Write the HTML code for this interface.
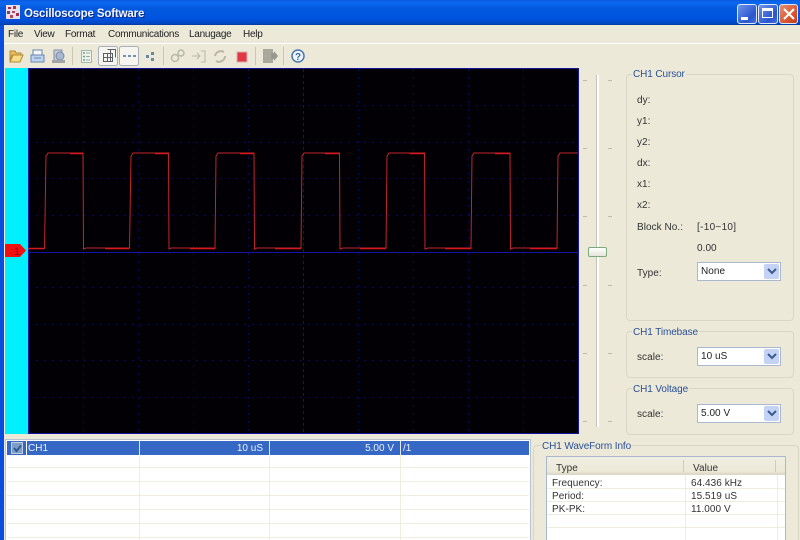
<!DOCTYPE html>
<html><head><meta charset="utf-8"><style>
html,body{margin:0;padding:0;width:800px;height:540px;overflow:hidden;background:#ece9d8;font-family:"Liberation Sans",sans-serif;font-size:11px;color:#222}
.a{position:absolute}
#page{position:relative;width:800px;height:540px;overflow:hidden;background:#ece9d8;filter:blur(.35px)}
#title{left:0;top:0;width:800px;height:25px;background:linear-gradient(#0a5be0 0,#0a6af0 3px,#0359de 8px,#0054e0 18px,#0349c8 23px,#02389f 25px)}
#t{left:24px;top:8px;color:#f4f6ff;font-weight:bold;font-size:11.5px;letter-spacing:-.15px;text-shadow:1px 1px #0a2a90}
.wb{top:4px;width:18px;height:18px;border:1px solid #dfe8fa;border-radius:3px;background:linear-gradient(135deg,#6f95ea,#2a55cf 70%,#4a70dc)}
.m{top:29px;font-size:10px;letter-spacing:-.25px;color:#222}
.sep{top:47px;width:1px;height:18px;background:#c9c6b4}
.gb{border:1px solid #d9d6c6;border-radius:4px;box-sizing:border-box}
.lg{color:#2a5097;background:#ece9d8;padding:0 1px;font-size:10px;letter-spacing:-.1px;line-height:12px;margin-top:1px}
.l{font-size:10px;letter-spacing:.05px;color:#333;margin-top:1px}
.cb{width:84px;height:19px;box-sizing:border-box;background:#fff;border:1px solid #a9b8cf}
.cb span{position:absolute;left:3px;top:3px;font-size:10px;letter-spacing:.05px;color:#222}
.cb i{position:absolute;right:1px;top:1px;width:15px;height:15px;background:#c4d3f4;border-radius:2px}
.cb svg{position:absolute;right:3px;top:5px}
.tk{width:4px;height:1px;background:#bdbaa9}
.hr{left:7px;width:522px;height:1px;background:#efedde}
.hr2{left:547px;width:238px;height:1px;background:#efedde}
.r{color:#eef2fa;font-size:10px;top:443px}
</style></head><body><div id="page">
<div class="a" id="title"></div>
<svg class="a" style="left:6px;top:5px" width="15" height="15"><rect width="14" height="14" fill="#e8dfe8"/><rect x="2" y="2" width="3" height="2" fill="#a82c4c"/><rect x="7" y="1" width="3" height="3" fill="#b03050"/><rect x="1" y="6" width="3" height="3" fill="#704878"/><rect x="6" y="6" width="3" height="2" fill="#c04060"/><rect x="10" y="8" width="3" height="3" fill="#a82c4c"/><rect x="4" y="10" width="3" height="3" fill="#b84060"/></svg>
<div class="a" id="t">Oscilloscope Software</div>
<div class="a wb" style="left:737px"><div class="a" style="left:3px;top:12px;width:7px;height:3px;background:#fff"></div></div>
<div class="a wb" style="left:758px"><div class="a" style="left:3px;top:3px;width:11px;height:10px;box-sizing:border-box;border:1px solid #fff;border-top:3px solid #fff"></div></div>
<div class="a wb" style="left:779px;width:17px;background:linear-gradient(135deg,#e8906c,#d5502a 70%,#c04020)"><svg class="a" style="left:3px;top:3px" width="12" height="12"><path d="M1 1L11 11M11 1L1 11" stroke="#fff" stroke-width="2"/></svg></div>

<div class="a" style="left:0;top:25px;width:4px;height:515px;background:#0a4ee0"></div>
<div class="a m" style="left:8px">File</div>
<div class="a m" style="left:34px">View</div>
<div class="a m" style="left:65px">Format</div>
<div class="a m" style="left:108px">Communications</div>
<div class="a m" style="left:189px">Lanugage</div>
<div class="a m" style="left:243px">Help</div>
<div class="a" style="left:4px;top:43px;width:796px;height:1px;background:#fff"></div>

<svg class="a" style="left:0;top:44px" width="320" height="24" fill="none">
<path d="M10 7h5l1 2h5v2H12l-2 6z" fill="#eebc58" stroke="#b08a38"/><path d="M10 18l3-7h10l-3 7z" fill="#f8dc88" stroke="#b08a38"/>
<path d="M33 6h9v5h-9z" fill="#f6f6f6" stroke="#6888b0"/><path d="M31 11h13v7H31z" fill="#bcd2ee" stroke="#6888b0"/><path d="M34 14h7" stroke="#6888b0"/>
<path d="M54 6h8v11h-8z" fill="#c8ccd4" stroke="#8090a8"/><circle cx="60" cy="12" r="4" fill="#a8b8d0" stroke="#7888a0"/><path d="M52 16h13v3H52z" fill="#a0a4a8"/>
<path d="M81.500 6.500h10v12h-10z" fill="#eef4ea" stroke="#a0b8a8"/><path d="M83 9h2M83 12.500h2M83 16h2" stroke="#60a880" stroke-width="1.500"/><path d="M86 9h4M86 12.500h4M86 16h4" stroke="#98a8b0"/>
<rect x="98.500" y="2.500" width="19" height="19" rx="2" fill="#f6f5ef" stroke="#a8b0bc"/><path d="M103.500 9.500h9v8h-9zM107.500 5.500h8v8M107.500 9.500v8M103.500 13.500h9M110.500 5.500v12" stroke="#586068"/>
<rect x="119.500" y="2.500" width="19" height="19" rx="2" fill="#f6f5ef" stroke="#a8b0bc"/><path d="M123 12h14" stroke="#7890b0" stroke-dasharray="3 2" stroke-width="2"/>
<path d="M146 11h3v3h-3zM151 8h3v3h-3zM151 14h3v3h-3z" fill="#6888a8"/>
<circle cx="175" cy="14" r="3.500" stroke="#b8b8a8" stroke-width="1.500"/><circle cx="181" cy="9" r="3" stroke="#b8b8a8" stroke-width="1.500"/>
<path d="M192 12h7m-2-3l3 3-3 3M201 7h4v11h-4" stroke="#b8b8a8"/>
<path d="M215 12a6 6 0 0 1 9-4m1 4a6 6 0 0 1-9 5" stroke="#b8b8a8" stroke-width="2"/>
<rect x="237" y="8" width="10" height="10" fill="#e03844" stroke="#d8b0b0"/>
<path d="M263 5h10v14h-10z" fill="#a8a89c"/><path d="M271 9h3v-2l4 5-4 5v-2h-3z" fill="#98988c"/>
<circle cx="298" cy="12" r="6" fill="#f0f4fa" stroke="#4878b0" stroke-width="1.500"/>
<text x="295" y="16" font-size="10" font-weight="bold" fill="#3868a8" font-family="Liberation Sans">?</text>
</svg>
<div class="a sep" style="left:72px"></div>
<div class="a sep" style="left:163px"></div>
<div class="a sep" style="left:255px"></div>
<div class="a sep" style="left:283px"></div>

<div class="a" style="left:5px;top:68px;width:23px;height:366px;background:#00f0ff"></div>
<svg class="a" style="left:5px;top:68px" width="574" height="366">
<rect x="23" y="0" width="551" height="366" fill="#020004"/>
<g stroke="#09095e" stroke-dasharray="2 6" stroke-width="1">
<path d="M78.500 1V365M133.500 1V365M188.500 1V365M243.500 1V365M353.500 1V365M408.500 1V365M463.500 1V365M518.500 1V365"/>
<path d="M23 37.500H573M23 74.500H573M23 110.500H573M23 147.500H573M23 219.500H573M23 256.500H573M23 292.500H573M23 329.500H573"/>
</g>
<g stroke="#10108c">
<path d="M298.500 1V365" stroke-dasharray="3 3"/><path d="M23 184.500H573" stroke="#1414a8"/>
<rect x="23.500" y=".5" width="550" height="365" fill="none" stroke="#1414a0"/>
</g>
<path d="M23 180.500H39.500L41 88L43 85H78L78.500 181L81 180H124.500L126 88L128 85H163.500L164 181L166 180H210L211 88L213 85H249L249.500 181L252 180H296L297 88L299 85H334.500L335 181L338 180H381L382 88L384 85H419.500L420 181L423 180H466L467 88L469 85H505L505.500 181L508 180H552L553 88L555 85H573" fill="none" stroke="#c0262c" stroke-width="1"/>
<path d="M65 85.500H78M150 85.500H163M235 85.500H249M320 85.500H334M405 85.500H419M490 85.500H505M23 180.500H39M100 180.500H124M185 180.500H210M270 180.500H296M355 180.500H381M440 180.500H466M525 180.500H552" stroke="#d8181e" stroke-width="1.500"/>
<path d="M0 176H15L21 182.500L15 189H0Z" fill="#f01010"/>
<text x="9" y="187" font-size="11" fill="#901010" font-family="Liberation Sans">1</text>
</svg>

<div class="a tk" style="left:583px;top:80px"></div><div class="a tk" style="left:608px;top:80px"></div>
<div class="a tk" style="left:583px;top:148px"></div><div class="a tk" style="left:608px;top:148px"></div>
<div class="a tk" style="left:583px;top:216px"></div><div class="a tk" style="left:608px;top:216px"></div>
<div class="a tk" style="left:583px;top:285px"></div><div class="a tk" style="left:608px;top:285px"></div>
<div class="a tk" style="left:583px;top:353px"></div><div class="a tk" style="left:608px;top:353px"></div>
<div class="a tk" style="left:583px;top:421px"></div><div class="a tk" style="left:608px;top:421px"></div>
<div class="a" style="left:596px;top:75px;width:3px;height:352px;background:#fff;border-left:1px solid #c6c3b4;box-sizing:border-box"></div>
<div class="a" style="left:588px;top:247px;width:19px;height:10px;border-radius:2px;background:linear-gradient(#fff,#e4e4dc);border:1px solid #7ca87c;box-sizing:border-box"></div>

<div class="a gb" style="left:626px;top:74px;width:168px;height:247px"></div>
<div class="a lg" style="left:632px;top:68px">CH1 Cursor</div>
<div class="a l" style="left:637px;top:94px">dy:</div>
<div class="a l" style="left:637px;top:115px">y1:</div>
<div class="a l" style="left:637px;top:136px">y2:</div>
<div class="a l" style="left:637px;top:157px">dx:</div>
<div class="a l" style="left:637px;top:178px">x1:</div>
<div class="a l" style="left:637px;top:199px">x2:</div>
<div class="a l" style="left:637px;top:221px">Block No.:</div>
<div class="a l" style="left:697px;top:221px;letter-spacing:.3px">[-10~10]</div>
<div class="a l" style="left:697px;top:242px">0.00</div>
<div class="a l" style="left:637px;top:267px">Type:</div>
<div class="a cb" style="left:697px;top:262px"><span>None</span><i></i><svg width="10" height="7"><path d="M1 1l4 4 4-4" fill="none" stroke="#3a5a90" stroke-width="2"/></svg></div>

<div class="a gb" style="left:626px;top:331px;width:168px;height:47px"></div>
<div class="a lg" style="left:632px;top:326px">CH1 Timebase</div>
<div class="a l" style="left:637px;top:351px">scale:</div>
<div class="a cb" style="left:697px;top:347px"><span>10 uS</span><i></i><svg width="10" height="7"><path d="M1 1l4 4 4-4" fill="none" stroke="#3a5a90" stroke-width="2"/></svg></div>
<div class="a gb" style="left:626px;top:388px;width:168px;height:47px"></div>
<div class="a lg" style="left:632px;top:383px">CH1 Voltage</div>
<div class="a l" style="left:637px;top:408px">scale:</div>
<div class="a cb" style="left:697px;top:404px"><span>5.00 V</span><i></i><svg width="10" height="7"><path d="M1 1l4 4 4-4" fill="none" stroke="#3a5a90" stroke-width="2"/></svg></div>

<div class="a" style="left:5px;top:439px;width:526px;height:101px;background:#fff;border:1px solid #b8c2d0;border-bottom:none;box-sizing:border-box"></div>
<div class="a" style="left:7px;top:441px;width:522px;height:14px;background:#3568c4"></div>
<div class="a" style="left:11px;top:442px;width:12px;height:12px;background:#7e9ec8;border:1px solid #c0cee0;box-sizing:border-box"><svg class="a" style="left:1px;top:1px" width="9" height="9"><path d="M1 4l2.500 3L8 1.500" fill="none" stroke="#2c5a94" stroke-width="2"/></svg></div>
<div class="a" style="left:26px;top:441px;width:1px;height:14px;background:#fff"></div>
<div class="a r" style="left:28px">CH1</div>
<div class="a r" style="right:537px">10 uS</div>
<div class="a r" style="right:406px">5.00 V</div>
<div class="a r" style="left:403px">/1</div>
<div class="a" style="left:139px;top:441px;width:1px;height:14px;background:#dfe6f4"></div>
<div class="a" style="left:269px;top:441px;width:1px;height:14px;background:#dfe6f4"></div>
<div class="a" style="left:400px;top:441px;width:1px;height:14px;background:#dfe6f4"></div>
<div class="a" style="left:139px;top:455px;width:1px;height:85px;background:#efedde"></div>
<div class="a" style="left:269px;top:455px;width:1px;height:85px;background:#efedde"></div>
<div class="a" style="left:400px;top:455px;width:1px;height:85px;background:#efedde"></div>
<div class="a hr" style="top:467px"></div><div class="a hr" style="top:481px"></div><div class="a hr" style="top:495px"></div><div class="a hr" style="top:509px"></div><div class="a hr" style="top:523px"></div><div class="a hr" style="top:537px"></div>

<div class="a gb" style="left:533px;top:445px;width:266px;height:100px"></div>
<div class="a lg" style="left:541px;top:440px">CH1 WaveForm Info</div>
<div class="a" style="left:546px;top:456px;width:240px;height:84px;background:#fff;border:1px solid #a9b8cf;border-bottom:none;box-sizing:border-box"></div>
<div class="a" style="left:547px;top:457px;width:238px;height:18px;background:linear-gradient(#f0eee2,#ece9d8 80%,#d8d4c2);"></div>
<div class="a" style="left:683px;top:460px;width:1px;height:12px;background:#cfccbc"></div>
<div class="a" style="left:775px;top:460px;width:1px;height:12px;background:#cfccbc"></div>
<div class="a l" style="left:556px;top:462px">Type</div>
<div class="a l" style="left:693px;top:462px">Value</div>
<div class="a l" style="left:552px;top:477px">Frequency:</div><div class="a l" style="left:691px;top:477px">64.436 kHz</div>
<div class="a l" style="left:552px;top:490px">Period:</div><div class="a l" style="left:691px;top:490px">15.519 uS</div>
<div class="a l" style="left:552px;top:503px">PK-PK:</div><div class="a l" style="left:691px;top:503px">11.000 V</div>
<div class="a" style="left:685px;top:475px;width:1px;height:65px;background:#efedde"></div>
<div class="a" style="left:777px;top:475px;width:1px;height:65px;background:#efedde"></div>
<div class="a hr2" style="top:488px"></div><div class="a hr2" style="top:501px"></div><div class="a hr2" style="top:514px"></div><div class="a hr2" style="top:527px"></div>
</div></body></html>
